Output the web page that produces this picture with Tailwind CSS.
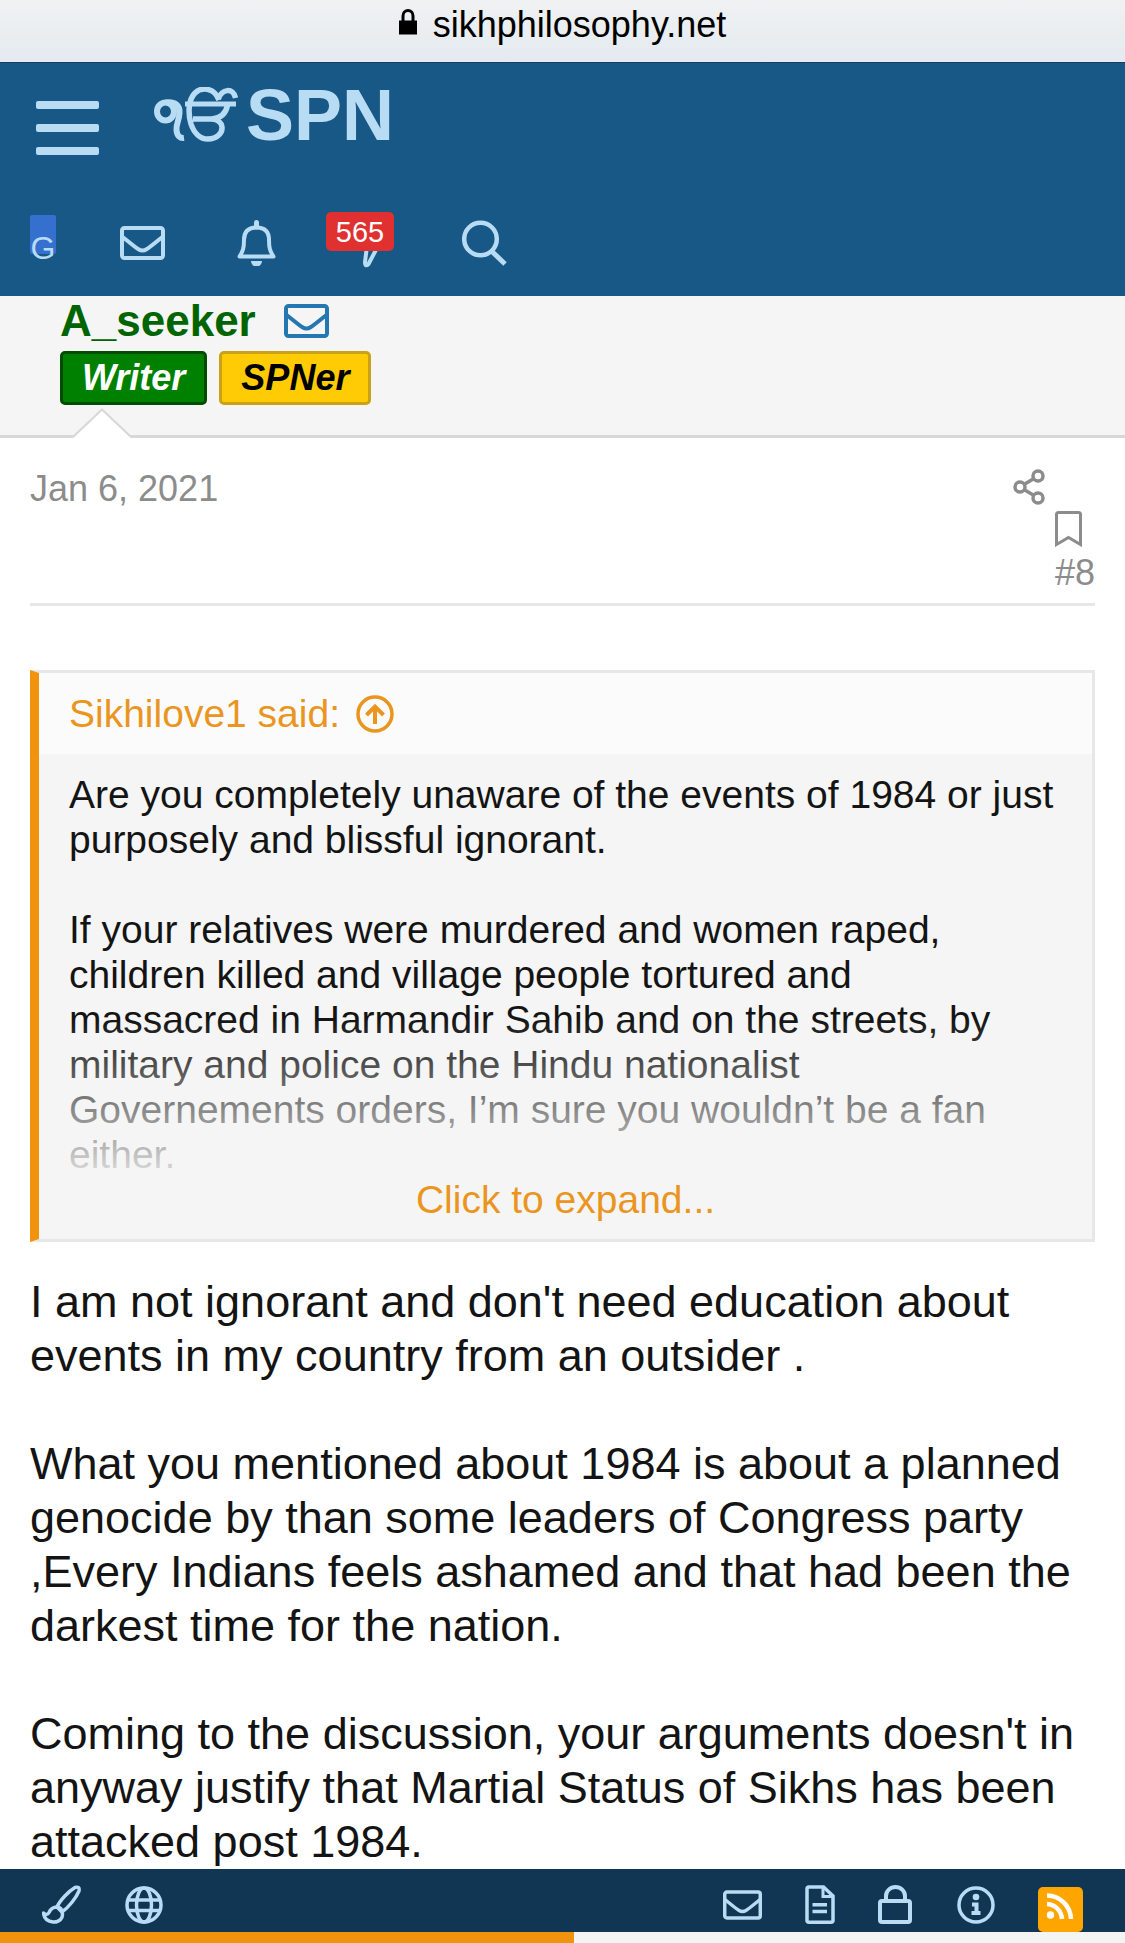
<!DOCTYPE html>
<html lang="en">
<head>
    <meta charset="UTF-8">
    <meta name="viewport" content="width=device-width, initial-scale=1.0">
    <title>SPN</title>
    <script src="https://cdn.jsdelivr.net/npm/@tailwindcss/browser@4"></script>
</head>
<body class="bg-white text-[#141414] font-['Liberation_Sans',Arial,sans-serif]">
    <svg class="hidden">
        <symbol id="envelope" viewBox="0 0 45 34" fill="none" stroke="currentColor" stroke-width="4">
            <rect x="2" y="2" width="41" height="30" rx="2.5"/>
            <path d="M2 10.500C9 16 14 20.500 18.500 23.300Q22.500 25.700 26.500 23.300C31 20.500 36 16 43 10.500"/>
        </symbol>
    </svg>

    <!-- address bar -->
    <div class="h-[62px] flex justify-center gap-4 pt-[5px] bg-linear-to-b from-[#f0f2f2] to-[#e4eaf0] text-black">
        <svg class="w-[18px] h-7 mt-1" viewBox="0 0 18 28">
            <path d="M4 13V7a5 5.500 0 0 1 10 0V13" fill="none" stroke="#000" stroke-width="3"/>
            <rect y="11.500" width="18" height="14" fill="#000"/>
        </svg>
        <span class="text-[36px] leading-10">sikhphilosophy.net</span>
    </div>

    <header class="bg-[#185886] text-[#b9dcf5] border-t border-[#123f63]">
        <div class="flex items-start px-9 pt-[38px] h-[138px]">
            <button class="w-[63px] h-[54px] flex flex-col justify-between" aria-label="Menu">
                <span class="w-full h-2 rounded-xs bg-[#b9dcf5]"></span>
                <span class="w-full h-2 rounded-xs bg-[#b9dcf5]"></span>
                <span class="w-full h-2 rounded-xs bg-[#b9dcf5]"></span>
            </button>
            <a href="#" class="flex items-center gap-2 ml-[55px] -mt-[26px] h-20">
                <svg class="w-[84px] h-14" viewBox="0 0 84 56" fill="none" stroke="currentColor" stroke-width="5.500" aria-label="Ik Onkar">
                    <ellipse cx="11.500" cy="24.500" rx="8.500" ry="9" stroke-width="6"/>
                    <path d="M12 15.500C21 14.500 26 18 25.500 26C25 34 22 37 22.500 43C23 49 26 51.500 30 51" stroke-width="6"/>
                    <path d="M31 17H82" stroke-width="5"/>
                    <path d="M65 13C60 0 47 0 41 6C34 13 34 27 37 37C40 46 46 52 54 52C63 52 68.500 46 68 40C67.500 36 64 32.500 58 32H39"/>
                    <path d="M58 32C67 31 72 27 73.500 18"/>
                    <path d="M64 12C68 2 79 0 81.500 11"/>
                </svg>
                <span class="text-[72px] leading-20 font-bold">SPN</span>
            </a>
        </div>
        <nav class="flex items-start h-[95px] px-[30px] pt-[11px]">
            <a href="#" class="mt-[3px] w-[26px] h-[39px] rounded-xs bg-[#3570cf] text-[32px] leading-[66px] text-center">G</a>
            <a href="#" class="ml-16 mt-[14px]" aria-label="Conversations"><svg class="w-[45px] h-[34px]"><use href="#envelope"/></svg></a>
            <a href="#" class="ml-[72px] mt-2" aria-label="Alerts">
                <svg class="w-[39px] h-[46px]" viewBox="0 0 39 46" fill="none" stroke="currentColor" stroke-width="4">
                    <path d="M2.500 36.500C6 31 7 28 7 20C7 12 11 7.500 19.500 7.500S32 12 32 20C32 28 33 31 36.500 36.500Z" stroke-linejoin="round"/>
                    <path d="M19.500 2.500V7" stroke-width="5" stroke-linecap="round"/>
                    <path d="M14 41h11a5.500 5.500 0 0 1-11 0Z" fill="currentColor" stroke="none"/>
                </svg>
            </a>
            <a href="#" class="relative ml-[50px] w-[68px] h-[54px]" aria-label="What's new, 565 unread">
                <svg class="absolute left-[34px] top-[26px] w-5 h-[30px]" viewBox="0 0 20 30" fill="none" stroke="currentColor" stroke-width="4">
                    <path d="M7 8L5 24Q5 29.500 8.500 26L18 8" stroke-linejoin="round"/>
                </svg>
                <span class="absolute inset-x-0 top-0 h-[39px] rounded-[5px] bg-[#e03030] text-white text-[29px] leading-10 text-center">565</span>
            </a>
            <a href="#" class="ml-[68px] mt-2" aria-label="Search">
                <svg class="w-[46px] h-[46px]" viewBox="0 0 46 46" fill="none" stroke="currentColor" stroke-width="4.500">
                    <circle cx="18.500" cy="19" r="16.300"/>
                    <path d="M30 31.500L43 44" stroke-width="5"/>
                </svg>
            </a>
        </nav>
    </header>

    <section class="relative bg-[#f5f5f5] border-b-3 border-[#d8d8d8] px-[60px] h-[142px]">
        <div class="flex items-center gap-7 h-[49px]">
            <a href="#" class="text-[44px] leading-[49px] font-bold text-[#006400]">A_seeker</a>
            <a href="#" class="text-[#2577b1]" aria-label="Message A_seeker"><svg class="w-[45px] h-[34px]"><use href="#envelope"/></svg></a>
        </div>
        <div class="flex gap-3 mt-1.5 text-[36px] leading-12 font-bold italic">
            <em class="px-[19px] rounded-[5px] border-3 border-[#004d00] bg-[#008000] text-white">Writer</em>
            <em class="px-[19px] rounded-[5px] border-3 border-[#c9a218] bg-[#ffcb05] text-black">SPNer</em>
        </div>
        <svg class="absolute left-[73px] -bottom-[3px] w-[58px] h-[30px]" viewBox="0 0 58 30">
            <path d="M0 30L29 1L58 30Z" fill="#fff"/>
            <path d="M0 29L29 1.500L58 29" fill="none" stroke="#d8d8d8" stroke-width="2"/>
        </svg>
    </section>

    <main class="px-[30px]">
        <div class="flex justify-between items-start h-[168px] pt-[31px] border-b-3 border-[#e7e7e7] text-[36px] leading-10 text-[#8c8c8c]">
            <time datetime="2021-01-06">Jan 6, 2021</time>
            <div class="flex flex-col items-end">
                <a href="#" class="mr-[50px]" aria-label="Share">
                    <svg class="w-8 h-9" viewBox="0 0 32 36" fill="none" stroke="currentColor" stroke-width="3.500">
                        <circle cx="7" cy="18" r="5"/>
                        <circle cx="25" cy="7" r="5"/>
                        <circle cx="25" cy="29" r="5"/>
                        <path d="M11 15.500L21 9.500M11 20.500L21 26.500"/>
                    </svg>
                </a>
                <a href="#" class="mr-[13px] mt-1.5" aria-label="Bookmark">
                    <svg class="w-[27px] h-9" viewBox="0 0 27 36" fill="none" stroke="currentColor" stroke-width="3">
                        <path d="M1.500 33.500V3.500Q1.500 1.500 3.500 1.500H23.500Q25.500 1.500 25.500 3.500V33.500L13.500 26.500Z"/>
                    </svg>
                </a>
                <a href="#" class="mt-1.5">#8</a>
            </div>
        </div>

        <blockquote class="mt-16 border-3 border-l-9 border-[#e7e7e7] border-l-[#f2930d] bg-[#f5f5f5] text-[39px] leading-[45px]">
            <div class="flex items-center h-[81px] px-[30px] bg-[#fbfbfb]">
                <a href="#" class="flex items-center gap-4 text-[#ea951f]">
                    Sikhilove1 said:
                    <svg class="w-[38px] h-[38px]" viewBox="0 0 38 38" fill="none" stroke="currentColor" stroke-width="3.500">
                        <circle cx="19" cy="19" r="17"/>
                        <path d="M19 29V11M10.500 20L19 11.500L27.500 20" stroke-width="4"/>
                    </svg>
                </a>
            </div>
            <div class="relative px-[30px] pt-[18px] pb-[17px]">
                <p>Are you completely unaware of the events of 1984 or just<br>purposely and blissful ignorant.</p>
                <p class="mt-[45px]">If your relatives were murdered and women raped,<br>children killed and village people tortured and<br>massacred in Harmandir Sahib and on the streets, by<br>military and police on the Hindu nationalist<br>Governements orders, I’m sure you wouldn’t be a fan<br>either.</p>
                <div class="absolute inset-x-0 bottom-0 h-[220px] bg-linear-to-b from-[#f5f5f5]/0 to-[#f5f5f5] to-80%"></div>
                <button class="relative block mx-auto text-[#ea951f]">Click to expand...</button>
            </div>
        </blockquote>

        <article class="mt-[33px] text-[45px] leading-[54px]">
            <p>I am not ignorant and don't need education about<br>events in my country from an outsider .</p>
            <p class="mt-[54px]">What you mentioned about 1984 is about a planned<br>genocide by than some leaders of Congress party<br>,Every Indians feels ashamed and that had been the<br>darkest time for the nation.</p>
            <p class="mt-[54px]">Coming to the discussion, your arguments doesn't in<br>anyway justify that Martial Status of Sikhs has been<br>attacked post 1984.</p>
        </article>
    </main>

    <footer class="flex items-center justify-between h-[63px] px-[42px] bg-[#103653] text-[#b9dcf5]">
        <div class="flex items-center gap-11 pt-2">
            <a href="#" aria-label="Style chooser">
                <svg class="w-[39px] h-[39px]" viewBox="0 0 39 39" fill="none" stroke="currentColor" stroke-width="3.500" stroke-linejoin="round">
                    <path d="M15 22C18 15 27 6 33 2.500Q38 1 37 6C34 13 27 22 20 27Z"/>
                    <path d="M20 27C22 33 17 37.500 11 37C5 36.500 2 33 1.500 28Q5 31 7 27.500C9 23 12 22 15 22C18 22.500 20 24.500 20 27Z"/>
                </svg>
            </a>
            <a href="#" aria-label="Language">
                <svg class="w-[38px] h-[38px]" viewBox="0 0 38 38" fill="none" stroke="currentColor" stroke-width="3.500">
                    <circle cx="19" cy="19" r="17"/>
                    <ellipse cx="19" cy="19" rx="7.500" ry="17"/>
                    <path d="M3 14H35M3 24.500H35"/>
                </svg>
            </a>
        </div>
        <div class="flex items-center">
            <a href="#" class="pt-2" aria-label="Contact us"><svg class="w-[39px] h-[30px]"><use href="#envelope"/></svg></a>
            <a href="#" class="pt-2 ml-[43px]" aria-label="Terms and rules">
                <svg class="w-[30px] h-[39px]" viewBox="0 0 30 39" fill="none" stroke="currentColor" stroke-width="3.500">
                    <path d="M4 2H18.500L28 11V35.500Q28 37.200 26 37.200H4Q2 37.200 2 35.500V4Q2 2 4 2Z"/>
                    <path d="M18 2V11.500H28" stroke-width="3"/>
                    <path d="M7.500 19.700H22M7.500 26.500H22"/>
                </svg>
            </a>
            <a href="#" class="pt-2 ml-[43px]" aria-label="Privacy policy">
                <svg class="w-[34px] h-[39px]" viewBox="0 0 34 39" fill="none" stroke="currentColor" stroke-width="4">
                    <rect x="2" y="16" width="30" height="21" rx="2"/>
                    <path d="M8 16V11a9.500 9 0 0 1 19 0V16"/>
                </svg>
            </a>
            <a href="#" class="pt-2 ml-[45px]" aria-label="Help">
                <svg class="w-[38px] h-[38px]" viewBox="0 0 38 38" fill="none" stroke="currentColor" stroke-width="3.500">
                    <circle cx="19" cy="19" r="17"/>
                    <circle cx="19" cy="11" r="3.300" fill="currentColor" stroke="none"/>
                    <path d="M15 18.500H19.500V27M14.500 27H23.500" stroke-width="4"/>
                </svg>
            </a>
            <a href="#" class="mt-[18px] ml-[43px] w-[45px] h-[45px] rounded-[5px] bg-[#ffa500] text-white" aria-label="RSS">
                <svg class="w-[45px] h-[45px]" viewBox="0 0 45 45" fill="none" stroke="currentColor" stroke-width="4.500">
                    <circle cx="12.500" cy="28" r="3.700" fill="currentColor" stroke="none"/>
                    <path d="M9 17C17 17.500 23.500 23.500 24 32"/>
                    <path d="M9 8.500C22 8.500 32.500 19 33 32"/>
                </svg>
            </a>
        </div>
    </footer>
    <!-- reading progress -->
    <div class="h-[11px] bg-[#f4f4f4]"><div class="h-full w-[51%] bg-[#f2930d]"></div></div>
</body>
</html>
